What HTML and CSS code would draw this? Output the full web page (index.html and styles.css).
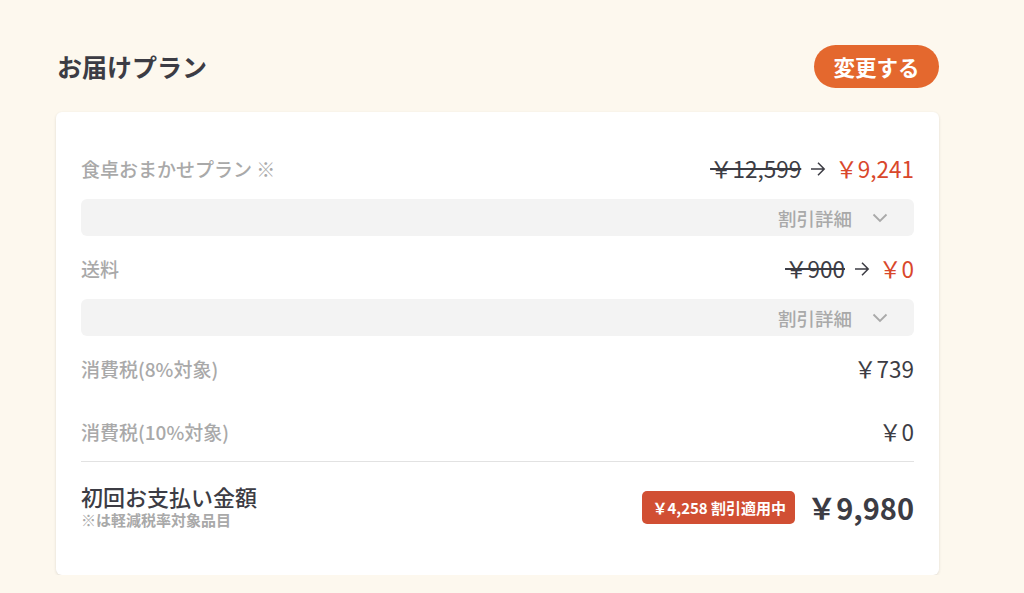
FILE: index.html
```html
<!DOCTYPE html>
<html lang="ja">
<head>
<meta charset="utf-8">
<link rel="stylesheet" href="styles.css">
</head>
<body>
<main class="page">
  <header class="head">
    <h1 class="title">お届けプラン</h1>
    <button class="change-btn">変更する</button>
  </header>
  <section class="card">
    <div class="row">
      <span class="label">食卓おまかせプラン ※</span>
      <span class="price">
        <s class="old">￥12,599</s>
        <svg class="arrow" width="16" height="16" viewBox="0 0 16 16"><path d="M1 8h13.5M8 1.8L14.2 8 8 14.2" fill="none" stroke="#3c3c44" stroke-width="1.5"/></svg>
        <span class="new">￥9,241</span>
      </span>
    </div>
    <div class="detail">
      <span>割引詳細</span>
      <svg class="chev" width="16" height="10" viewBox="0 0 16 10"><path d="M1.5 1.5L8 8l6.5-6.5" fill="none" stroke="#a9a9a9" stroke-width="1.8"/></svg>
    </div>
    <div class="row">
      <span class="label">送料</span>
      <span class="price">
        <s class="old">￥900</s>
        <svg class="arrow" width="16" height="16" viewBox="0 0 16 16"><path d="M1 8h13.5M8 1.8L14.2 8 8 14.2" fill="none" stroke="#3c3c44" stroke-width="1.5"/></svg>
        <span class="new">￥0</span>
      </span>
    </div>
    <div class="detail">
      <span>割引詳細</span>
      <svg class="chev" width="16" height="10" viewBox="0 0 16 10"><path d="M1.5 1.5L8 8l6.5-6.5" fill="none" stroke="#a9a9a9" stroke-width="1.8"/></svg>
    </div>
    <div class="row">
      <span class="label">消費税(8%対象)</span>
      <span class="price">￥739</span>
    </div>
    <div class="row row-tax">
      <span class="label">消費税(10%対象)</span>
      <span class="price">￥0</span>
    </div>
    <div class="total">
      <div class="total-left">
        <div class="total-title">初回お支払い金額</div>
        <div class="total-note">※は軽減税率対象品目</div>
      </div>
      <div class="total-right">
        <span class="badge">￥4,258 割引適用中</span>
        <span class="total-price">￥9,980</span>
      </div>
    </div>
  </section>
</main>
</body>
</html>
```
FILE: styles.css
```css
* { box-sizing: border-box; }
html, body {
  margin: 0;
  background: #fdf8ee;
  font-family: "Noto Sans CJK JP", "Noto Sans", sans-serif;
  color: #3c3c44;
}
.page {
  width: 883px;
  margin-left: 56px;
  padding-top: 45px;
}
.head {
  display: flex;
  justify-content: space-between;
  align-items: center;
  height: 43px;
  margin-bottom: 24px;
}
.title {
  margin: 0 0 0 1px;
  font-size: 25px;
  font-weight: 700;
  line-height: 1;
}
.change-btn {
  height: 43px;
  width: 125px;
  padding: 0;
  border: none;
  border-radius: 22px;
  background: #e4682e;
  color: #fff;
  font-family: inherit;
  font-size: 21.5px;
  font-weight: 700;
  line-height: 1;
}
.card {
  background: #fff;
  border-radius: 6px;
  box-shadow: 0 1px 3px rgba(0,0,0,0.12);
  padding: 41px 25px 44px;
  display: flex;
  flex-direction: column;
}
.row {
  display: flex;
  justify-content: space-between;
  align-items: center;
  height: 30px;
}
.row + .row { margin-top: 33px; }
.label {
  font-size: 19px;
  font-weight: 500;
  color: #a9a9a9;
}
.price {
  display: flex;
  align-items: center;
  font-size: 22.5px;
  color: #3c3c44;
}
.old { text-decoration: line-through; text-decoration-thickness: 1.5px; }
.arrow { margin: 2px 9px 0 9px; }
.new { color: #d9472b; }
.detail {
  margin: 16px 0 17px;
  height: 37px;
  background: #f3f3f3;
  border-radius: 6px;
  display: flex;
  justify-content: flex-end;
  align-items: center;
  padding-right: 26px;
  font-size: 18.5px;
  font-weight: 500;
  color: #a9a9a9;
}
.chev { margin-left: 20px; }
.total {
  margin-top: 15px;
  border-top: 1px solid #e2e2e2;
  padding-top: 21px;
  display: flex;
  justify-content: space-between;
  align-items: center;
}
.total-title {
  font-size: 22px;
  font-weight: 500;
  line-height: 26px;
}
.total-note {
  font-size: 15px;
  font-weight: 700;
  color: #a9a9a9;
  line-height: 22px;
}
.total-right {
  display: flex;
  align-items: center;
}
.badge {
  background: #d14f33;
  color: #fff;
  border-radius: 5px;
  font-size: 15px;
  font-weight: 700;
  height: 33px;
  line-height: 33px;
  padding: 0 9px 0 10px;
  margin-right: 12px;
}
.total-price {
  font-size: 29px;
  font-weight: 700;
}
```
